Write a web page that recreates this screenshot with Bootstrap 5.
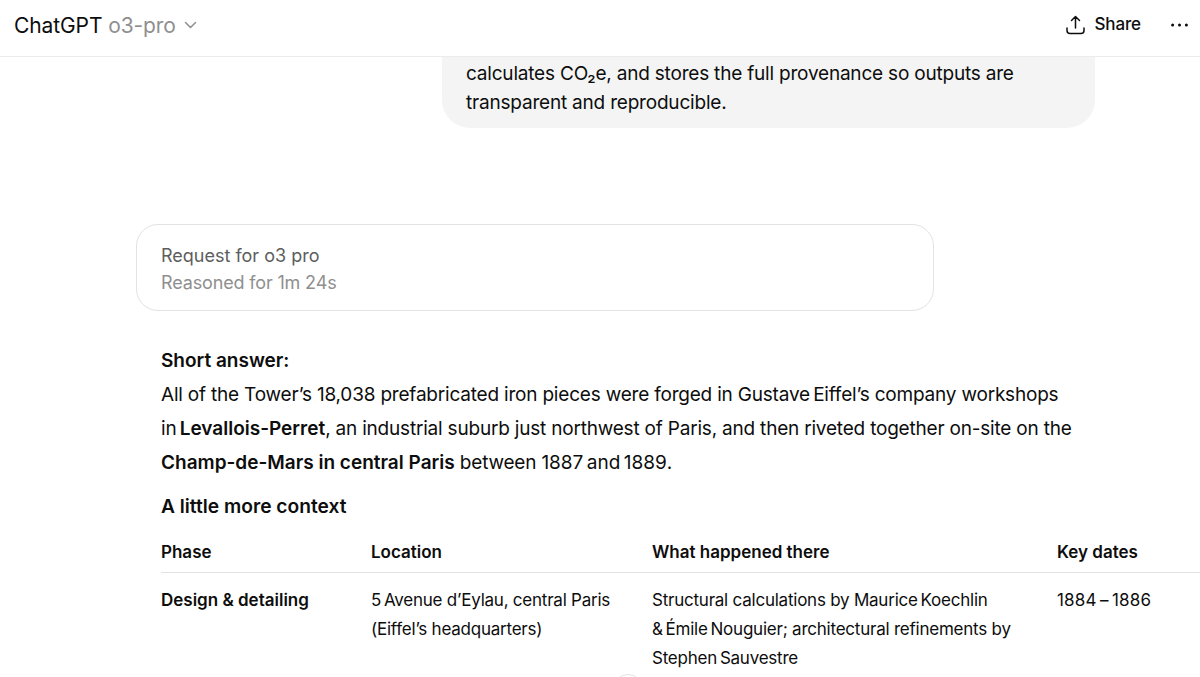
<!DOCTYPE html>
<html lang="en">
<head>
    <meta charset="UTF-8" />
    <meta name="viewport" content="width=device-width, initial-scale=1" />
    <title>ChatGPT o3-pro</title>
    <link href="https://cdn.jsdelivr.net/npm/bootstrap@5.3.7/dist/css/bootstrap.min.css" rel="stylesheet" />
    <style>
        html, body { height: 100%; overflow: hidden; }
        body { font-family: Inter, "Liberation Sans", sans-serif; color: #0d0d0d; background: #fff; letter-spacing: -0.1px; }
        .top-bar { height: 57px; border-bottom: 1px solid #ececec; padding: 0 12px 6px 14px; }
        .brand-name { font-size: 21px; line-height: 1; }
        .brand-model { color: #8f8f8f; }
        .brand-chevron { margin-left: 7px; }
        .share-label { font-size: 17px; font-weight: 500; }
        .share-icon { margin-right: 9px; }
        .more-dots { margin-left: 30px; }
        .chat-area { position: relative; height: 620px; overflow: hidden; }
        .user-bubble { width: 653px; margin-left: 442px; padding: 2px 24px 11px; background: #f4f4f4; border-radius: 0 0 28px 28px; font-size: 19px; letter-spacing: -0.2px; line-height: 29px; }
        .reason-box { width: 798px; height: 87px; margin: 96px 0 0 136px; padding: 2px 24px 0; border: 1px solid #e3e3e3; border-radius: 22px; font-size: 18px; line-height: 27px; }
        .reason-title { color: #5d5d5d; letter-spacing: 0; }
        .reason-time { color: #8f8f8f; letter-spacing: -0.15px; }
        .answer-block { margin: 33px 0 0 161px; font-size: 19px; letter-spacing: -0.2px; line-height: 34px; }
        .answer-block p { margin: 0; }
        .answer-block b { font-weight: 600; letter-spacing: 0; }
        .year-span { letter-spacing: 0; }
        .context-title { margin-top: 9px !important; font-size: 19.2px; font-weight: 600; letter-spacing: 0; }
        .facts-table { table-layout: fixed; width: 1100px; margin: 16px 0 0; font-size: 17px; letter-spacing: -0.23px; line-height: 29px; color: #0d0d0d; }
        .facts-table th, .facts-table td { padding: 0; border: 0; font-weight: 400; vertical-align: top; }
        .facts-table thead th { font-weight: 600; letter-spacing: 0; height: 33px; border-bottom: 1px solid #e3e3e3; line-height: 27px; }
        .facts-table tbody td { padding-top: 13px; }
        .facts-table td.phase-name { font-weight: 600; letter-spacing: 0; }
        .facts-table td.date-range { letter-spacing: 0.2px; }
        .col-phase { width: 210px; }
        .col-location { width: 281px; }
        .col-what { width: 405px; }
        .scroll-down { position: absolute; left: 612px; top: 617px; width: 32px; height: 32px; border: 1px solid #e3e3e3; border-radius: 50%; background: #fff; }
    </style>
</head>
<body>
<header class="top-bar d-flex align-items-center justify-content-between">
    <div class="d-flex align-items-center brand-name">
        <span>ChatGPT&nbsp;<span class="brand-model">o3-pro</span></span>
        <svg class="brand-chevron" width="15" height="14" viewBox="0 0 15 14" fill="none" stroke="#8f8f8f" stroke-width="1.5" stroke-linecap="round" stroke-linejoin="round"><path d="M2.500 4.500l5 5 5-5"/></svg>
    </div>
    <div class="d-flex align-items-center">
        <svg class="share-icon" width="19" height="20" viewBox="0 0 19 20" fill="none" stroke="#0d0d0d" stroke-width="1.5" stroke-linecap="round" stroke-linejoin="round"><path d="M9.500 13V1.500M5.500 5.500l4-4 4 4M1 13v2.500A3 3 0 0 0 4 18.500h11a3 3 0 0 0 3-3V13"/></svg>
        <span class="share-label">Share</span>
        <svg class="more-dots" width="17" height="4" viewBox="0 0 17 4" fill="#0d0d0d"><circle cx="1.600" cy="2" r="1.500"/><circle cx="8.500" cy="2" r="1.500"/><circle cx="15.400" cy="2" r="1.500"/></svg>
    </div>
</header>
<main class="chat-area">
    <div class="user-bubble">calculates CO₂e, and stores the full provenance so outputs are<br />transparent and reproducible.</div>

    <div class="reason-box d-flex flex-column justify-content-center">
        <div class="reason-title">Request for o3 pro</div>
        <div class="reason-time">Reasoned for 1m 24s</div>
    </div>

    <div class="answer-block">
        <p><b>Short answer:</b></p>
        <p>All of the Tower’s 18,038 prefabricated iron pieces were forged in Gustave&#8201;Eiffel’s company workshops<br />in&#8201;<b>Levallois-Perret</b>, an industrial suburb just northwest of Paris, and then riveted together on-site on the<br /><b>Champ-de-Mars in central Paris</b> between <span class="year-span">1887&#8201;and&#8201;1889</span>.</p>
        <p class="context-title">A little more context</p>
        <table class="table facts-table">
            <colgroup><col class="col-phase" /><col class="col-location" /><col class="col-what" /><col /></colgroup>
            <thead>
                <tr><th>Phase</th><th>Location</th><th>What happened there</th><th>Key dates</th></tr>
            </thead>
            <tbody>
                <tr>
                    <td class="phase-name">Design &amp; detailing</td>
                    <td>5&#8201;Avenue d’Eylau, central Paris<br />(Eiffel’s headquarters)</td>
                    <td>Structural calculations by Maurice&#8201;Koechlin<br />&amp;&#8201;Émile&#8201;Nouguier; architectural refinements by<br />Stephen&#8201;Sauvestre</td>
                    <td class="date-range">1884&#8201;–&#8201;1886</td>
                </tr>
            </tbody>
        </table>
    </div>
    <div class="scroll-down"></div>
</main>
<script src="https://cdn.jsdelivr.net/npm/bootstrap@5.3.7/dist/js/bootstrap.bundle.min.js"></script>
</body>
</html>
